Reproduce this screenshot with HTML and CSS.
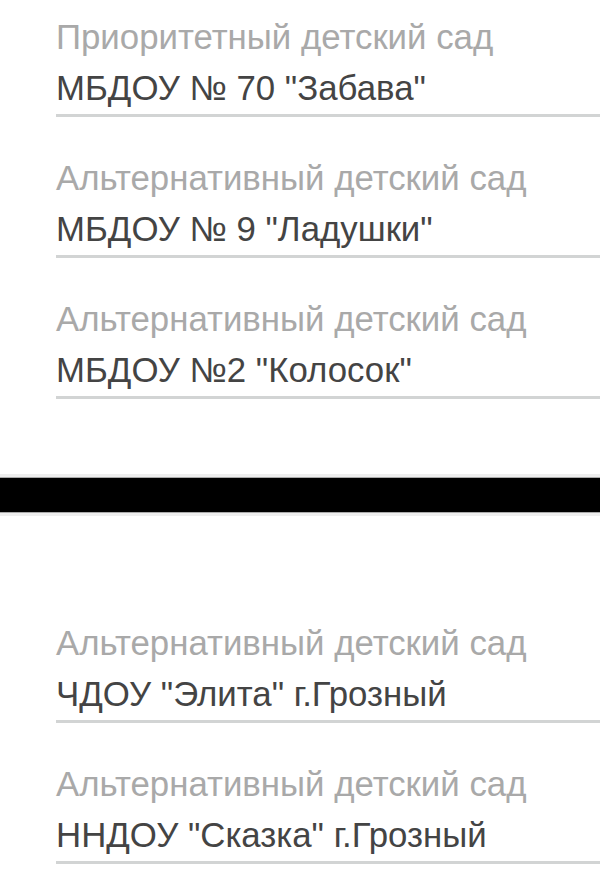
FILE: index.html
```html
<!DOCTYPE html>
<html lang="ru">
<head>
    <meta charset="UTF-8">
    <meta name="viewport" content="width=device-width, initial-scale=1.0">
    <title>Детские сады</title>
    <link rel="stylesheet" href="styles.css">
</head>
<body>

    <div class="group group-top">
        <div class="field">
            <div class="field-label">Приоритетный детский сад</div>
            <div class="field-value">МБДОУ № 70 "Забава"</div>
        </div>
        <div class="field">
            <div class="field-label">Альтернативный детский сад</div>
            <div class="field-value">МБДОУ № 9 "Ладушки"</div>
        </div>
        <div class="field">
            <div class="field-label">Альтернативный детский сад</div>
            <div class="field-value">МБДОУ №2 "Колосок"</div>
        </div>
    </div>

    <div class="divider"></div>

    <div class="group group-bottom">
        <div class="field">
            <div class="field-label">Альтернативный детский сад</div>
            <div class="field-value">ЧДОУ "Элита" г.Грозный</div>
        </div>
        <div class="field">
            <div class="field-label">Альтернативный детский сад</div>
            <div class="field-value">ННДОУ "Сказка" г.Грозный</div>
        </div>
    </div>

</body>
</html>
```

FILE: styles.css
```css
body {
    font-family: 'Liberation Sans', Arial, sans-serif;
    background-color: #fff;
    margin: 0;
    padding: 0;
}

.group {
    padding-left: 56px;
}

.group-top {
    padding-top: 11px;
}

.group-bottom {
    padding-top: 104px;
}

.field {
    border-bottom: 3px solid #d2d4d4;
    margin-bottom: 35px;
}

.field-label {
    color: #a9a9a9;
    font-size: 34.8px;
    line-height: 51px;
}

.field-value {
    color: #444;
    font-size: 34.8px;
    line-height: 52px;
}

/* black strip between the two lists; margin collapses with the last field */
.divider {
    margin-top: 78px;
    height: 34px;
    background-color: #000;
    border-top: 1px solid #aaa;
    border-bottom: 1px solid #aaa;
    box-shadow: 0 -3px 0 #eee, 0 3px 0 #eee;
}
```
